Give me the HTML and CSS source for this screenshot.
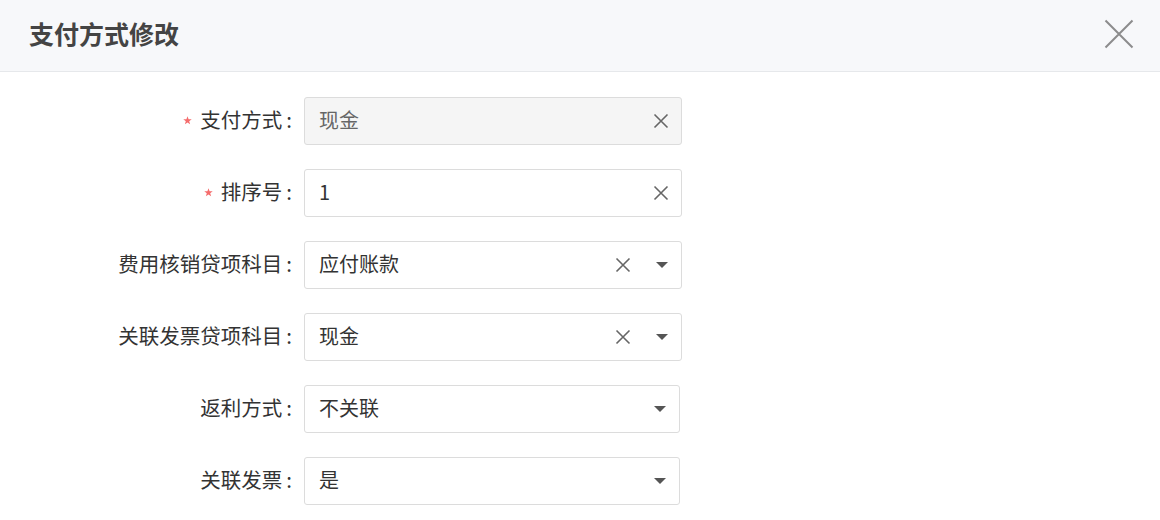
FILE: index.html
```html
<!DOCTYPE html>
<html lang="zh-CN">
<head>
<meta charset="UTF-8" />
<title>支付方式修改</title>
<link rel="stylesheet" href="styles.css">
</head>
<body>
	<div class="dialog">
		<header class="dialog-head">
			<h1 class="dialog-title">支付方式修改</h1>
			<button class="dialog-close" aria-label="关闭">
				<svg width="30" height="30" viewBox="0 0 30 30"><path d="M1.5 1.5 L28.5 28.5 M28.5 1.5 L1.5 28.5" stroke="#8c8c8c" stroke-width="2" fill="none"/></svg>
			</button>
		</header>

		<form class="form">
			<div class="row">
				<label class="label"><svg class="star" width="9" height="9" viewBox="0 0 10 10"><path d="M5 0.3 L6.2 3.6 L9.7 3.7 L6.9 5.8 L7.9 9.3 L5 7.2 L2.1 9.3 L3.1 5.8 L0.3 3.7 L3.8 3.6 Z" fill="#f56c6c"/></svg>支付方式<span class="colon">:</span></label>
				<div class="field field-disabled">
					<span class="value">现金</span>
					<span class="clear"><svg width="16" height="16" viewBox="0 0 16 16"><path d="M1.5 1.5 L14.5 14.5 M14.5 1.5 L1.5 14.5" stroke="#666" stroke-width="1.6" fill="none"/></svg></span>
				</div>
			</div>

			<div class="row">
				<label class="label"><svg class="star" width="9" height="9" viewBox="0 0 10 10"><path d="M5 0.3 L6.2 3.6 L9.7 3.7 L6.9 5.8 L7.9 9.3 L5 7.2 L2.1 9.3 L3.1 5.8 L0.3 3.7 L3.8 3.6 Z" fill="#f56c6c"/></svg>排序号<span class="colon">:</span></label>
				<div class="field">
					<span class="value">1</span>
					<span class="clear"><svg width="16" height="16" viewBox="0 0 16 16"><path d="M1.5 1.5 L14.5 14.5 M14.5 1.5 L1.5 14.5" stroke="#666" stroke-width="1.6" fill="none"/></svg></span>
				</div>
			</div>

			<div class="row">
				<label class="label">费用核销贷项科目<span class="colon">:</span></label>
				<div class="field">
					<span class="value">应付账款</span>
					<span class="clear"><svg width="16" height="16" viewBox="0 0 16 16"><path d="M1.5 1.5 L14.5 14.5 M14.5 1.5 L1.5 14.5" stroke="#666" stroke-width="1.6" fill="none"/></svg></span>
					<span class="caret"></span>
				</div>
			</div>

			<div class="row">
				<label class="label">关联发票贷项科目<span class="colon">:</span></label>
				<div class="field">
					<span class="value">现金</span>
					<span class="clear"><svg width="16" height="16" viewBox="0 0 16 16"><path d="M1.5 1.5 L14.5 14.5 M14.5 1.5 L1.5 14.5" stroke="#666" stroke-width="1.6" fill="none"/></svg></span>
					<span class="caret"></span>
				</div>
			</div>

			<div class="row">
				<label class="label">返利方式<span class="colon">:</span></label>
				<div class="field field-narrow">
					<span class="value">不关联</span>
					<span class="caret"></span>
				</div>
			</div>

			<div class="row">
				<label class="label">关联发票<span class="colon">:</span></label>
				<div class="field field-narrow">
					<span class="value">是</span>
					<span class="caret"></span>
				</div>
			</div>
		</form>
	</div>
</body>
</html>
```

FILE: styles.css
```css
body {
	margin: 0;
	background-color: white;
	font-family: "Noto Sans CJK SC", "Noto Sans", sans-serif;
	color: #333;
}

.dialog-head {
	height: 71px;
	background-color: #f7f8fa;
	border-bottom: 1px solid #e6e8eb;
	display: flex;
	align-items: center;
	justify-content: space-between;
	padding: 0 26px 0 29px;
}

.dialog-title {
	margin: 0 0 5px 0;
	font-size: 25px;
	font-weight: 600;
	color: #444;
	line-height: 1;
}

.dialog-close {
	border: none;
	background: none;
	padding: 0;
	width: 30px;
	height: 30px;
	display: flex;
	margin-top: -4px;
}

.form {
	padding-top: 25px;
	display: flex;
	flex-direction: column;
	gap: 24px;
}

.row {
	display: grid;
	grid-template-columns: 292px auto;
	column-gap: 12px;
	align-items: center;
}

.label {
	display: flex;
	align-items: center;
	justify-content: flex-end;
	font-size: 20.5px;
	line-height: 1;
	padding-bottom: 3px;
	color: #333;
	white-space: nowrap;
}

.colon {
	margin-left: 4px;
}

.star {
	margin-right: 8px;
	margin-top: 1px;
}

.field {
	box-sizing: border-box;
	width: 378px;
	height: 48px;
	border: 1px solid #dcdcdc;
	border-radius: 3px;
	background: white;
	display: flex;
	align-items: center;
	padding: 0 12px 0 14px;
	font-size: 20px;
}

.field-narrow {
	width: 376px;
}

.field-disabled {
	background-color: #f5f5f5;
	color: #666;
}

.value {
	flex: 1;
	line-height: 1;
	padding-bottom: 3px;
}

.clear {
	display: flex;
	width: 16px;
	height: 16px;
}

.caret {
	width: 0;
	height: 0;
	border-left: 6.5px solid transparent;
	border-right: 6.5px solid transparent;
	border-top: 6px solid #555;
	margin-left: 25px;
	margin-right: 1px;
}
```
